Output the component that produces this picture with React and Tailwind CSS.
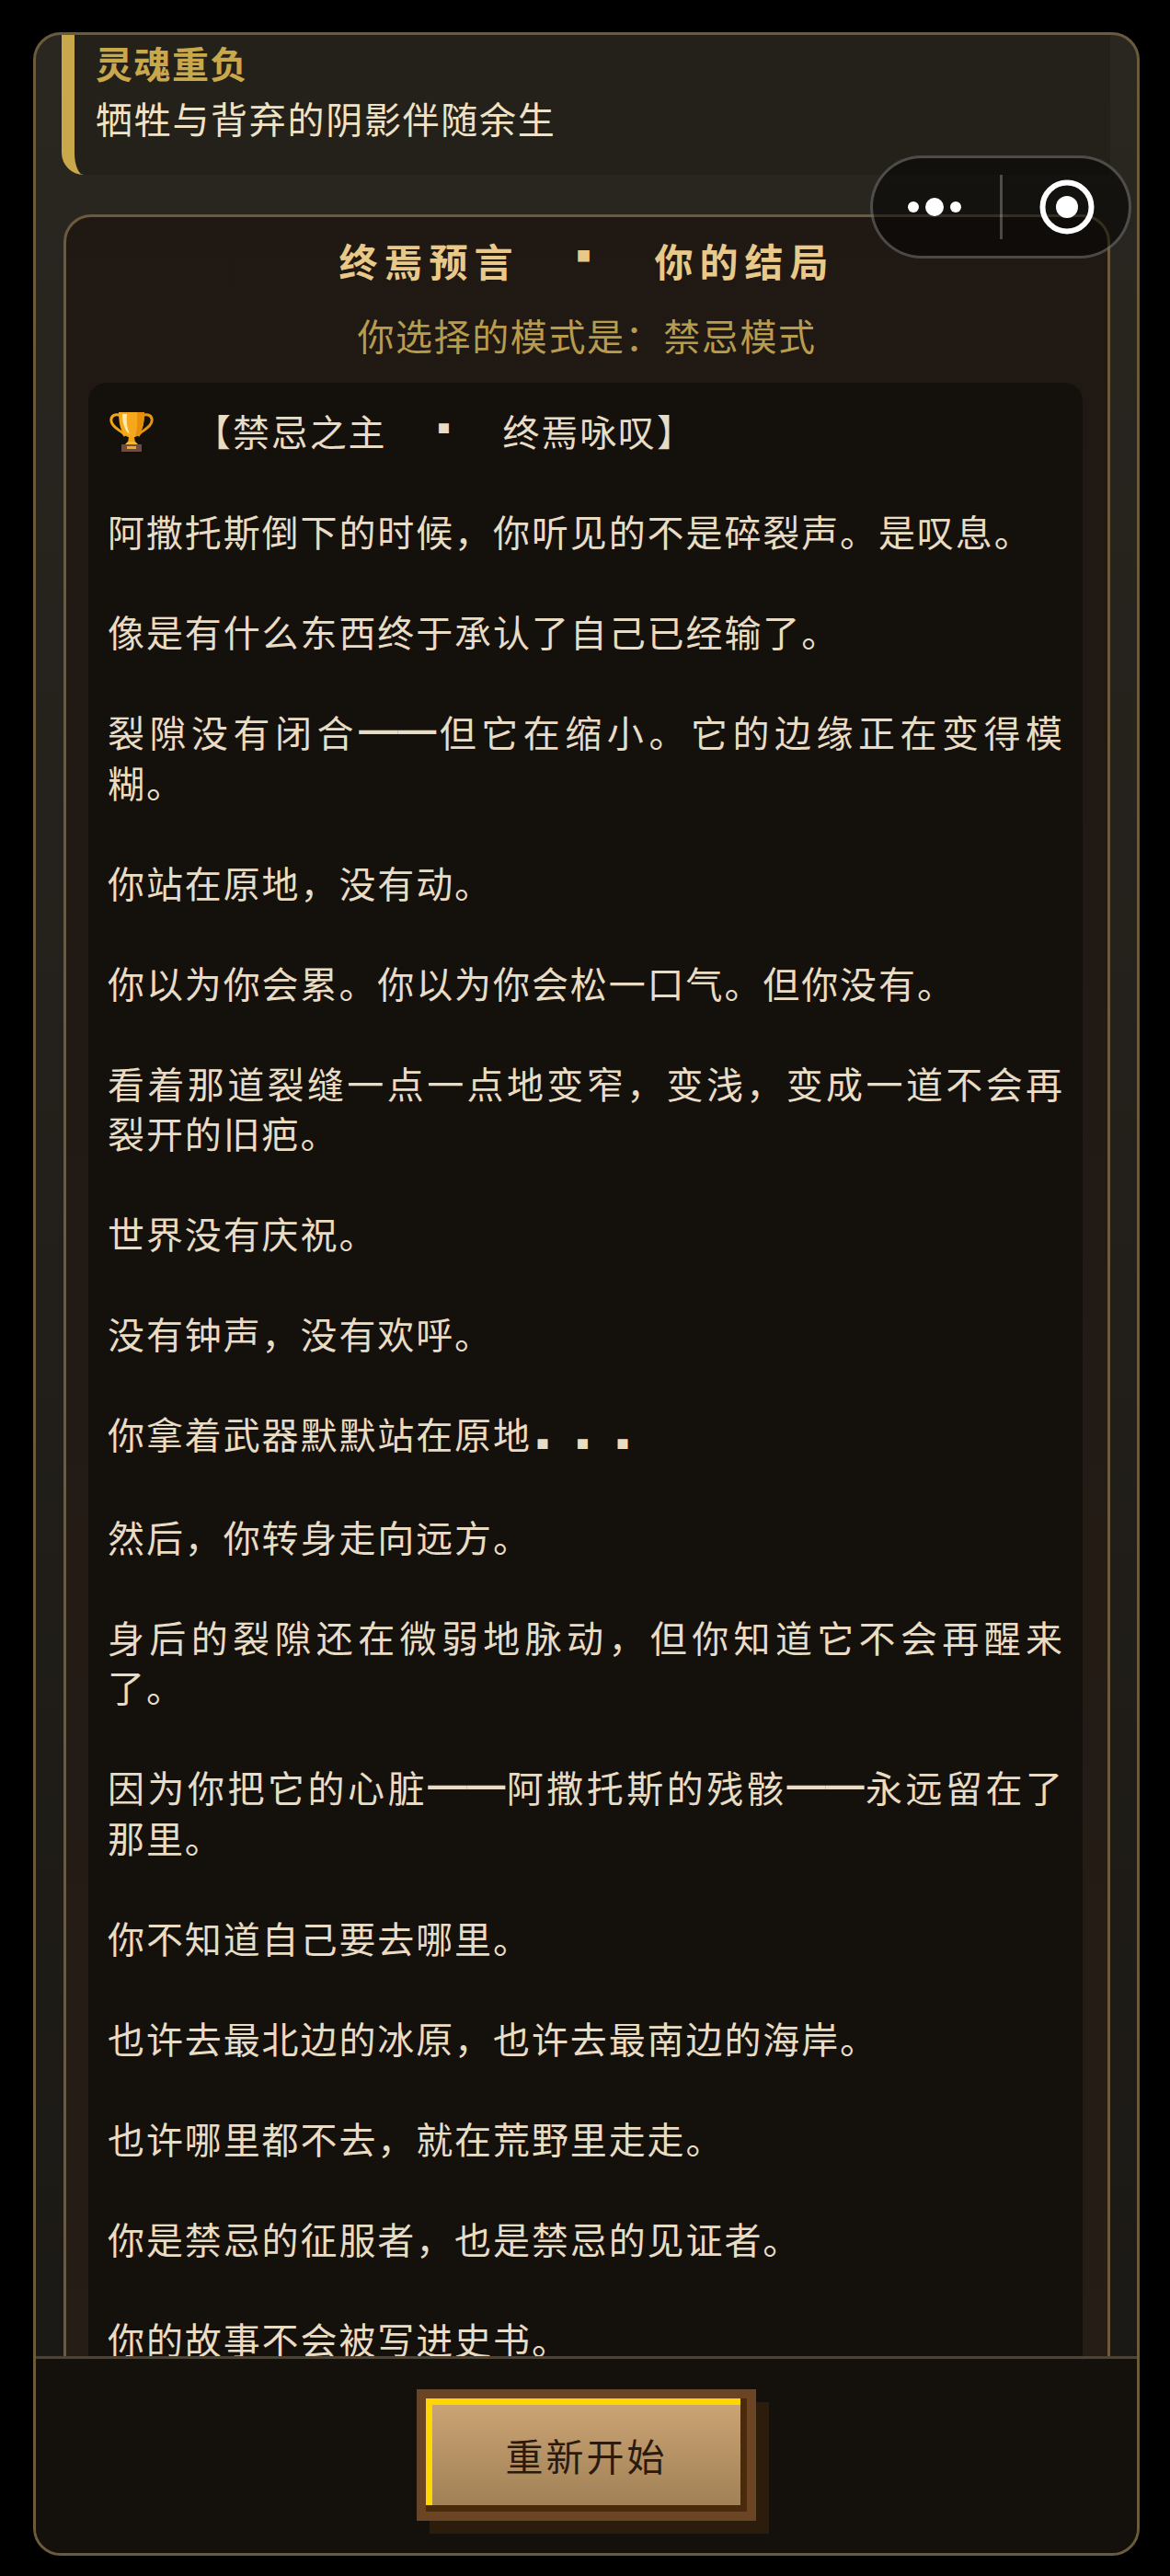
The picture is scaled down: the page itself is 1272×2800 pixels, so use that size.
import React from 'react';

function Dash() {
  return <span className="font-['Liberation_Sans'] font-bold text-[42px] leading-none tracking-normal align-[5px]">——</span>;
}

function Trophy() {
  return (
    <svg viewBox="0 0 48 44" className="inline-block ml-[2px] w-[48px] h-[44px] align-[-6px]">
      <path d="M13 5C6 2 1 5 2 11c1 6 8 9 13 13l2 3" fill="none" stroke="#f2a413" strokeWidth="3" />
      <path d="M35 5c7-3 12 0 11 6-1 6-8 9-13 13l-2 3" fill="none" stroke="#e8950e" strokeWidth="3" />
      <path d="M10 1h28c0 14-3 24-10 27h-8C13 25 10 15 10 1z" fill="#f5a81c" />
      <path d="M30 1h8c0 14-3 24-10 27 2-7 3-17 2-27z" fill="#e58e0c" />
      <path d="M14 3h5c-1 8 0 15 3 22-5-3-8-12-8-22z" fill="#ffe9b0" />
      <path d="M21 28h6l1 6h-8z" fill="#f2a413" />
      <path d="M17 36l3-3h8l3 3z" fill="#f7b733" />
      <rect x="13" y="36" width="22" height="8" fill="#6d4c41" />
      <rect x="19" y="38" width="10" height="3" fill="#f5a81c" />
    </svg>
  );
}

function MenuCapsule() {
  return (
    <div className="absolute left-[946px] top-[169px] w-[284px] h-[112px] rounded-full border-[3px] border-white/25 bg-black/50 flex items-center z-10">
      <svg viewBox="0 0 138 106" className="w-[138px] h-[106px]">
        <circle cx="44" cy="53" r="6" fill="#fff" />
        <circle cx="67" cy="53" r="10" fill="#fff" />
        <circle cx="90" cy="53" r="6" fill="#fff" />
      </svg>
      <div className="w-[3px] h-[70px] bg-white/25" />
      <svg viewBox="0 0 137 106" className="w-[137px] h-[106px]">
        <circle cx="70" cy="53" r="26.5" fill="none" stroke="#fff" strokeWidth="6" />
        <circle cx="70" cy="53" r="12" fill="#fff" />
      </svg>
    </div>
  );
}

export default function App() {
  return (
    <div className="relative h-[2800px] bg-black pt-[35px] px-[36px] font-['Noto_Sans_CJK_SC','Noto_Sans',sans-serif]">
      <MenuCapsule />
      <div className="h-[2743px] w-[1203px] rounded-[30px] border-[3px] border-[#6b5a3c] bg-[linear-gradient(180deg,#2a2620,#1a1814)] overflow-hidden flex flex-col">
        <div className="flex-1 min-h-0 overflow-hidden px-[28px]">
          <div className="h-[152px] w-[1140px] rounded-bl-[24px] border-l-[14px] border-[#c9a84c] bg-[#24201a] pl-[23px]">
            <div className="text-[40px] leading-[60px] font-bold tracking-[1.5px] text-[#c9a84c]">灵魂重负</div>
            <div className="text-[40px] leading-[60px] tracking-[1.7px] text-[#f0e2c4]">牺牲与背弃的阴影伴随余生</div>
          </div>
          <div className="mt-[43px] ml-[2px] w-[1138px] rounded-t-[30px] border-[3px] border-b-0 border-[#6b5a3c] bg-[linear-gradient(180deg,#1f1813,#261d16)] px-[24px] pt-[16px]">
            <div className="text-center text-[42px] leading-[60px] font-bold tracking-[7px] text-[#e8c98a]">
              终焉预言<span className="mx-[47px] align-[6px] leading-none text-[46px]">▪</span>你的结局
            </div>
            <div className="text-center text-[40px] leading-[60px] tracking-[1.6px] text-[#b89c4e] mt-[21px]">你选择的模式是：禁忌模式</div>
            <div className="mt-[22px] w-[1081px] rounded-t-[20px] bg-[#14100c] pl-[21px] pr-[20px] pt-[25px] pb-[100px]">
              <div className="text-justify text-[40px] leading-[54.5px] tracking-[1.9px] text-[#e8dcc4] flex flex-col gap-[54.5px]">
                <p><Trophy /><span className="ml-[44px]">【禁忌之主</span><span className="mx-[42px] align-[4px] leading-none text-[40px]">▪</span>终焉咏叹】</p>
                <p>阿撒托斯倒下的时候，你听见的不是碎裂声。是叹息。</p>
                <p>像是有什么东西终于承认了自己已经输了。</p>
                <p>裂隙没有闭合<Dash />但它在缩小。它的边缘正在变得模糊。</p>
                <p>你站在原地，没有动。</p>
                <p>你以为你会累。你以为你会松一口气。但你没有。</p>
                <p>看着那道裂缝一点一点地变窄，变浅，变成一道不会再裂开的旧疤。</p>
                <p>世界没有庆祝。</p>
                <p>没有钟声，没有欢呼。</p>
                <p>你拿着武器默默站在原地<span className="ml-[-8px] align-[-10px] leading-none tracking-[3.6px] text-[40px]">▪▪▪</span></p>
                <p>然后，你转身走向远方。</p>
                <p>身后的裂隙还在微弱地脉动，但你知道它不会再醒来了。</p>
                <p>因为你把它的心脏<Dash />阿撒托斯的残骸<Dash />永远留在了那里。</p>
                <p>你不知道自己要去哪里。</p>
                <p>也许去最北边的冰原，也许去最南边的海岸。</p>
                <p>也许哪里都不去，就在荒野里走走。</p>
                <p>你是禁忌的征服者，也是禁忌的见证者。</p>
                <p>你的故事不会被写进史书。</p>
                <p>但裂隙记得你。</p>
              </div>
            </div>
          </div>
        </div>
        <div className="h-[214px] shrink-0 border-t-[3px] border-[#4f4330] bg-[#14110d] flex justify-center pt-[43px]">
          <button className="w-[349px] h-[123px] bg-[linear-gradient(180deg,#cda575,#9e7f55)] text-[41px] tracking-[3px] text-[#2c1a0c] shadow-[inset_-7px_-7px_0_#4a2a0c,inset_7px_7px_0_#ffd700,0_0_0_10px_#6b4423,14px_14px_0_10px_#2c1c0c]">
            重新开始
          </button>
        </div>
      </div>
    </div>
  );
}
